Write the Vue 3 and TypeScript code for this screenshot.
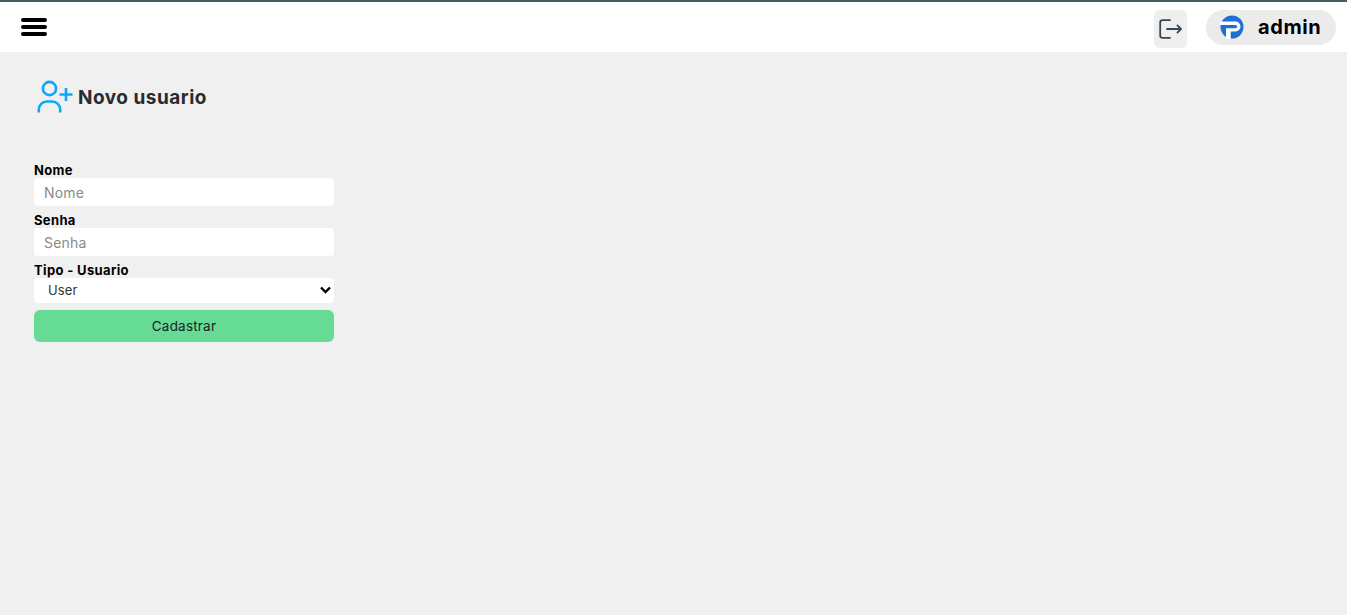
<script setup lang="ts">
const fields = [
  { label: 'Nome', placeholder: 'Nome', type: 'text' },
  { label: 'Senha', placeholder: 'Senha', type: 'password' },
]
</script>

<template>
  <div class="page">
    <header class="topbar">
      <div class="burger"><span></span><span></span><span></span></div>
      <div class="right">
        <button class="logout" aria-label="Sair">
          <svg width="24" height="20" viewBox="0 0 24 20" fill="none" stroke="#3a4653" stroke-width="1.800" stroke-linecap="round" stroke-linejoin="round">
            <path d="M11 1.2H3.6A2.4 2.4 0 0 0 1.2 3.6v12.8a2.4 2.4 0 0 0 2.4 2.4H11" />
            <path d="M8 10h14M18.4 6.4 22 10l-3.6 3.6" />
          </svg>
        </button>
        <div class="user">
          <svg class="logo" width="24" height="24" viewBox="0 0 24 24">
            <circle cx="12" cy="12" r="11.5" fill="#1f6fd6" />
            <path d="M0 6.500H15.500a5 5 0 0 1 0 10H10.700V24H6V13.300h9.500a1.700 1.700 0 0 0 0-3.400H0Z" fill="#fff" />
          </svg>
          <span>admin</span>
        </div>
      </div>
    </header>
    <main class="content">
      <div class="title">
        <svg width="36" height="34" viewBox="0 0 36 34" fill="none" stroke="#0aa9fb" stroke-width="2.6" stroke-linecap="butt">
          <circle cx="12.500" cy="8.500" r="6.600" />
          <path d="M1.800 32.500v-3a8 8 0 0 1 8-8h5.400a8 8 0 0 1 8 8v3" />
          <path d="M22.500 14.500h13M29 8v13" />
        </svg>
        <h1>Novo usuario</h1>
      </div>
      <form class="form" @submit.prevent>
        <label v-for="f in fields" :key="f.label" class="field">
          <span>{{ f.label }}</span>
          <input :type="f.type" :placeholder="f.placeholder" />
        </label>
        <label class="field">
          <span>Tipo - Usuario</span>
          <div class="select-wrap">
            <select>
              <option>User</option>
            </select>
            <svg class="chevron" width="11" height="8" viewBox="0 0 11 8" fill="none" stroke="#000" stroke-width="2.400">
              <path d="M1 1.500 5.500 6 10 1.500" />
            </svg>
          </div>
        </label>
        <button class="submit" type="submit">Cadastrar</button>
      </form>
    </main>
  </div>
</template>

<style>
html, body { margin: 0; background: #f0f0f0; }
</style>

<style scoped>
.page {
  min-height: 615px;
  background: #f0f0f0;
  font-family: Inter, "Liberation Sans", sans-serif;
}
.topbar {
  box-sizing: border-box;
  height: 52px;
  background: #fff;
  border-top: 2px solid #4a5a63;
  display: flex;
  align-items: center;
  justify-content: space-between;
  padding: 0 11px 0 21px;
}
.burger { display: flex; flex-direction: column; gap: 3px; width: 26px; margin-top: -1px; }
.burger span { height: 4px; background: #000; border-radius: 2px; }
.right { display: flex; align-items: center; gap: 19px; }
.logout {
  width: 33px;
  height: 38px;
  padding: 0;
  border: 0;
  border-radius: 6px;
  background: #efefef;
  display: flex;
  align-items: center;
  justify-content: center;
  margin-top: 4px;
}
.user {
  width: 130px;
  height: 35px;
  border-radius: 18px;
  background: #ecebec;
  display: flex;
  align-items: center;
  padding-left: 13px;
  gap: 15px;
  box-sizing: border-box;
  font-size: 20px;
  font-weight: 700;
  letter-spacing: 0.6px;
  color: #000;
}
.logo { margin-left: 1px; margin-right: -1px; }
.content { padding: 27px 0 0 34px; }
.title { display: flex; align-items: center; height: 36px; gap: 5px; margin-left: 3px; }
.title h1 { margin: 0; font-size: 19px; font-weight: 700; letter-spacing: 0.5px; color: #2b2b2b; }
.form { width: 300px; margin-top: 48px; display: flex; flex-direction: column; }
.field { display: flex; flex-direction: column; font-size: 13px; font-weight: 700; letter-spacing: 0.35px; color: #000; }
.field span { height: 15px; line-height: 15px; }
.field input {
  box-sizing: border-box;
  height: 28px;
  border: 0;
  border-radius: 4px;
  background: #fff;
  padding: 0 10px;
  margin-bottom: 7px;
  font: 400 14px Inter, "Liberation Sans", sans-serif;
  letter-spacing: 0.2px;
  outline: none;
}
.field input::placeholder { color: #8a8a8a; }
.select-wrap { position: relative; display: flex; margin-bottom: 7px; }
.select-wrap select {
  appearance: none;
  flex: 1;
  box-sizing: border-box;
  height: 25px;
  border: 0;
  border-radius: 4px;
  background: #fff;
  padding: 0 0 2px 14px;
  font: 400 13px Inter, "Liberation Sans", sans-serif;
  letter-spacing: 0.1px;
  color: #333;
}
.chevron { position: absolute; right: 3px; top: 8px; pointer-events: none; }
.submit {
  height: 32px;
  border: 0;
  border-radius: 6px;
  background: #65db95;
  color: #222;
  font: 400 13.5px Inter, "Liberation Sans", sans-serif;
  letter-spacing: 0.2px;
}
</style>
